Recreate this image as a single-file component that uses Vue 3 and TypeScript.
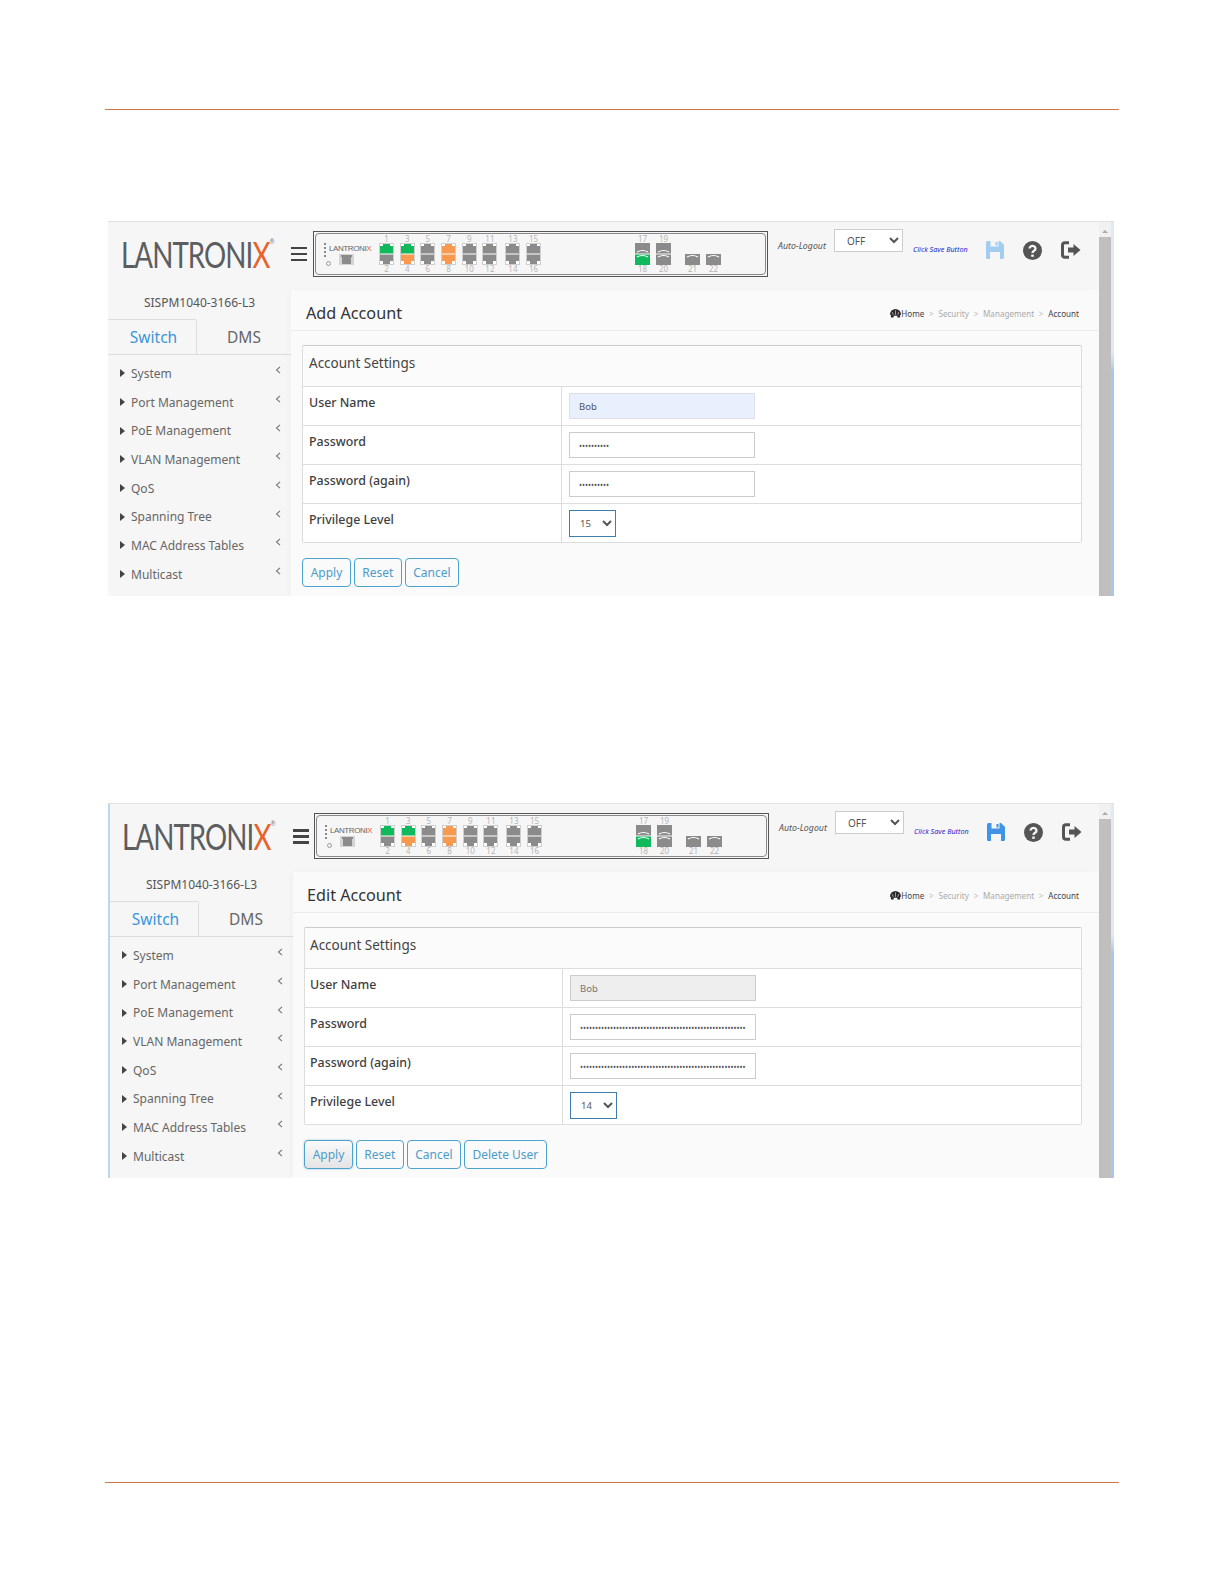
<script setup lang="ts">
interface Port { top: number; bottom: number; topColor: string; bottomColor: string; extra?: boolean }
interface Panel {
  title: string; nameClass: string; user: string; readonlyUser: boolean; passLen: number; level: string;
  buttons: string[]; second: boolean;
}
const c = (t: number, a = 'gray', b = 'gray', extra = false): Port => ({ top: t, bottom: t + 1, topColor: a, bottomColor: b, extra })
const ports: Port[] = [
  c(1, 'green'), c(3, 'green', 'orange'), c(5), c(7, 'orange', 'orange'), c(9), c(11), c(13, 'gray', 'gray', true), c(15),
]
const menu = ['System', 'Port Management', 'PoE Management', 'VLAN Management', 'QoS', 'Spanning Tree', 'MAC Address Tables', 'Multicast']
const crumbs = ['Security', 'Management']
const panels: Panel[] = [
  { title: 'Add Account', nameClass: 'autofill', user: 'Bob', readonlyUser: false, passLen: 10, level: '15', buttons: ['Apply', 'Reset', 'Cancel'], second: false },
  { title: 'Edit Account', nameClass: 'locked', user: 'Bob', readonlyUser: true, passLen: 55, level: '14', buttons: ['Apply', 'Reset', 'Cancel', 'Delete User'], second: true },
]
</script>

<template>
  <div class="page">
    <hr class="rule rule-top" />
    <section v-for="p in panels" :key="p.title" class="panel" :class="{ second: p.second }">
      <div class="main">
        <header class="top">
          <div class="logo-box"><div class="logo">LANTRONI<span class="x">X</span><sup>®</sup></div></div>
          <div class="burger"><i></i><i></i><i></i></div>
          <div class="device">
            <div class="device-inner">
              <div class="dots"><i></i><i></i><i></i><i></i><b></b></div>
              <div class="brand">
                <span class="brand-text">LANTRONI<em>X</em></span>
                <svg class="mini" viewBox="0 0 15 11"><path d="M0 0h15v11H0z" fill="#d4d4d4" /><path d="M2 1h11v2h-1v7H3V3H2z" fill="#8b8b8b" /></svg>
              </div>
              <div class="ports">
                <div v-for="q in ports" :key="q.top" class="port" :class="{ extra: q.extra }">
                  <span>{{ q.top }}</span>
                  <svg viewBox="0 0 15 22" width="15" height="22">
                    <rect x=".5" y=".5" width="14" height="21" fill="#fff" stroke="#cfcfcf" />
                    <path :class="q.topColor" d="M4 1h7v2h3v7.500H1V3h3z" />
                    <path :class="q.bottomColor" d="M1 11.500h13V18h-3v3H4v-3H1z" />
                  </svg>
                  <span>{{ q.bottom }}</span>
                </div>
              </div>
              <div class="sfps">
                <div class="port">
                  <span>17</span>
                  <svg viewBox="0 0 15 22" width="15" height="22">
                    <path class="gray" d="M0 0h15v10.500H0z" /><path class="green" d="M0 11.500h15V22H0z" />
                    <path d="M2 9q5.500-3 11 0M2 14q5.500-3 11 0" fill="none" stroke="#fff" stroke-width="1.200" />
                  </svg>
                  <span>18</span>
                </div>
                <div class="port">
                  <span>19</span>
                  <svg viewBox="0 0 15 22" width="15" height="22">
                    <path class="gray" d="M0 0h15v10.500H0z" /><path class="gray" d="M0 11.500h15V22H0z" />
                    <path d="M2 9q5.500-3 11 0M2 14q5.500-3 11 0" fill="none" stroke="#fff" stroke-width="1.200" />
                  </svg>
                  <span>20</span>
                </div>
                <div class="port low first-low">
                  <svg viewBox="0 0 15 11" width="15" height="11">
                    <path class="gray" d="M0 0h15v11H0z" /><path d="M2 3q5.500-3 11 0" fill="none" stroke="#fff" stroke-width="1.200" />
                  </svg>
                  <span>21</span>
                </div>
                <div class="port low">
                  <svg viewBox="0 0 15 11" width="15" height="11">
                    <path class="gray" d="M0 0h15v11H0z" /><path d="M2 3q5.500-3 11 0" fill="none" stroke="#fff" stroke-width="1.200" />
                  </svg>
                  <span>22</span>
                </div>
              </div>
            </div>
          </div>
          <span class="auto">Auto-Logout</span>
          <select class="off"><option>OFF</option></select>
          <span class="hint">Click Save Button</span>
          <svg class="ic save" viewBox="0 0 18 18" width="18" height="18">
            <path d="M0 1.500A1.500 1.500 0 0 1 1.500 0H14l4 4v12.500a1.500 1.500 0 0 1-1.500 1.500h-15A1.500 1.500 0 0 1 0 16.500z" />
            <path class="hole" d="M4.500 0h8v5.500h-8zM4 11h10v7H4z" />
            <path d="M9.500 1h2v3.500h-2z" />
          </svg>
          <svg class="ic help" viewBox="0 0 18 18" width="19" height="19">
            <circle cx="9" cy="9" r="9" />
            <path d="M6.200 7.200a2.800 2.500 0 1 1 4.300 2.100c-1 .6-1.500 1-1.500 2" fill="none" stroke="#f6f6f6" stroke-width="2.200" />
            <path d="M7.800 12.800h2.400v2.200H7.800z" fill="#f6f6f6" />
          </svg>
          <svg class="ic exit" viewBox="0 0 20 18" width="20" height="18">
            <path d="M8 1.700H4A2.500 2.500 0 0 0 1.500 4.200v9.600A2.500 2.500 0 0 0 4 16.300h4" fill="none" stroke="#555" stroke-width="3" />
            <path d="M7 6.500h5.500V3l7 6-7 6v-3.500H7z" fill="#555" />
          </svg>
        </header>
        <div class="body">
          <aside class="side">
            <div class="name">SISPM1040-3166-L3</div>
            <div class="tabs">
              <div class="tab active">Switch</div>
              <div class="tab">DMS</div>
            </div>
            <ul class="menu">
              <li v-for="m in menu" :key="m">
                <i class="tri"></i><span>{{ m }}</span>
                <svg class="chev" viewBox="0 0 6 8" width="6" height="8"><path d="M5 .8 1.500 4 5 7.200" fill="none" stroke="#777" stroke-width="1.100" /></svg>
              </li>
            </ul>
          </aside>
          <div class="content">
            <div class="head">
              <h2>{{ p.title }}</h2>
              <nav class="crumbs">
                <svg viewBox="0 0 12 10" width="11" height="10">
                  <path d="M1 10V7.500L0 6.500A6 6 0 0 1 12 6.500L11 7.500V10H8V8H4v2z" fill="#2b2b2b" />
                  <path d="M6 7V2M3.500 7 2.500 4M8.500 7 9.500 4" stroke="#fff" stroke-width=".6" />
                </svg>
                <b>Home</b>
                <template v-for="t in crumbs" :key="t"><u>&gt;</u><span>{{ t }}</span></template>
                <u>&gt;</u><b>Account</b>
              </nav>
            </div>
            <div class="card">
              <div class="card-title">Account Settings</div>
              <div class="rows">
                <div class="row">
                  <label>User Name</label>
                  <div><input class="field" :class="p.nameClass" type="text" :value="p.user" :readonly="p.readonlyUser" /></div>
                </div>
                <div class="row">
                  <label>Password</label>
                  <div><input class="field pass" type="password" :value="'x'.repeat(p.passLen)" /></div>
                </div>
                <div class="row">
                  <label>Password (again)</label>
                  <div><input class="field pass" type="password" :value="'x'.repeat(p.passLen)" /></div>
                </div>
                <div class="row">
                  <label>Privilege Level</label>
                  <div><select class="level"><option>{{ p.level }}</option></select></div>
                </div>
              </div>
            </div>
            <div class="actions">
              <button v-for="b in p.buttons" :key="b" type="button" :class="{ pressed: p.second && b === 'Apply' }">{{ b }}</button>
            </div>
          </div>
        </div>
      </div>
      <div class="scroll"><i class="up"></i><div class="thumb"></div></div>
      <div class="strip"></div>
    </section>
    <hr class="rule rule-bottom" />
  </div>
</template>

<style>
html, body { margin: 0; background: #fff; }
</style>

<style scoped>
.page { width: 1224px; height: 1584px; box-sizing: border-box; padding-top: 109px; font-family: "Noto Sans", sans-serif; color: #444; overflow: hidden; }
.rule { height: 1px; border: 0; background: #c8794a; margin: 0 105px; }
.rule-top { margin-bottom: 111px; }
.rule-bottom { margin-top: 304px; }
.panel { display: flex; height: 375px; margin-left: 108px; width: 1006px; overflow: hidden; background: #f6f6f6; border-top: 1px solid #e2e2e2; box-sizing: border-box; }
.panel.second { margin-top: 207px; }
.main { flex: 1; min-width: 0; display: flex; flex-direction: column; }
.second .main { border-left: 2px solid #bcd6ee; }
.top { display: flex; align-items: flex-start; height: 68px; flex: none; }
.logo-box { margin: 14px 0 0 13px; width: 156px; height: 36px; flex: none; }
.logo { font: 400 36px/36px "Lato", sans-serif; color: #5c5d5f; letter-spacing: -1.2px; white-space: nowrap; transform: scaleX(.77); transform-origin: left top; }
.second .logo-box { margin-left: 12px; }
.logo .x { color: #e8622a; }
.logo sup { font-size: 8px; line-height: 8px; vertical-align: 24px; letter-spacing: 0; color: #777; }
.burger { margin: 25px 0 0 14px; width: 16px; display: flex; flex-direction: column; gap: 4px; flex: none; }
.burger i { height: 2px; background: #444; }
.second .burger { gap: 3px; margin-left: 15px; }
.second .burger i { height: 3px; }
.device { margin: 9px 0 0 6px; width: 455px; height: 46px; box-sizing: border-box; border: 1px solid #555; padding: 1px; flex: none; }
.second .device { margin-left: 5px; }
.device-inner { height: 100%; box-sizing: border-box; border: 1px solid #888; border-radius: 4px; display: flex; padding-left: 8px; }
.dots { width: 5px; display: flex; flex-direction: column; gap: 2px; padding-top: 9px; }
.dots i { width: 2px; height: 2px; background: #888; }
.dots b { width: 5px; height: 5px; border: 1px solid #999; border-radius: 50%; box-sizing: border-box; margin: 2px 0 0 2px; }
.brand { width: 50px; display: flex; flex-direction: column; padding-top: 11px; }
.brand-text { font: 8px/8px "Liberation Sans", sans-serif; color: #666; letter-spacing: -.4px; white-space: nowrap; }
.brand-text em { color: #e8622a; font-style: normal; }
.mini { width: 15px; height: 11px; margin: 1px 0 0 10px; flex: none; }
.ports, .sfps { display: flex; gap: 5.700px; }
.sfps { margin-left: 94px; gap: 6px; }
.port { width: 15px; display: flex; flex-direction: column; align-items: center; padding-top: 1px; }
.port span { font-size: 8px; line-height: 8px; height: 8px; color: #b5b5b5; margin: 0 -3px; }
.port svg { display: block; flex: none; }
.port.extra { margin-left: 2.300px; }
.port.low { padding-top: 20px; }
.first-low { margin-left: 8px; }
.gray { fill: #8b8b8b; }
.green { fill: #10b95c; }
.orange { fill: #f79a50; }
.auto { margin: 17px 0 0 10px; width: 56px; font-size: 8.800px; font-style: italic; line-height: 14px; color: #555; white-space: nowrap; flex: none; }
.off { margin: 7px 0 0 0; width: 69px; height: 23px; background: #fff; border: 1px solid #ccc; font: 10px "Noto Sans", sans-serif; color: #555; padding-left: 8px; border-radius: 0; flex: none; }
.hint { margin: 22px 0 0 10px; width: 73px; font-size: 7.200px; font-style: italic; line-height: 10px; color: #2a2ad0; white-space: nowrap; flex: none; }
.ic { flex: none; margin-top: 19px; display: block; }
.save { fill: #a3cdf0; }
.second .save { fill: #3f94e4; }
.hole { fill: #f6f6f6; }
.save .hole + path { fill: #a3cdf0; }
.second .save .hole + path { fill: #3f94e4; }
.help { fill: #555; margin-left: 19px; }
.exit { margin-left: 19px; }
.body { flex: 1; display: flex; min-height: 0; }
.side { width: 183px; flex: none; }
.name { text-align: center; font-size: 12px; line-height: 16px; color: #555; padding: 5px 0 8px; }
.tabs { display: flex; height: 36px; box-sizing: border-box; border-bottom: 1px solid #ddd; }
.tab { width: 94px; text-align: center; font-size: 15.500px; line-height: 34px; color: #666; box-sizing: border-box; padding-top: 1px; }
.tab.active { width: 89px; color: #3b97dc; border: 1px solid #ddd; border-bottom: 0; border-left: 0; border-top-right-radius: 2px; padding: 0 0 0 3px; }
.menu { list-style: none; margin: 4px 0 0; padding: 0; }
.menu li { height: 28.700px; display: flex; align-items: center; font-size: 12px; color: #666; padding-left: 12px; position: relative; }
.tri { width: 0; height: 0; border-left: 5px solid #444; border-top: 4px solid transparent; border-bottom: 4px solid transparent; margin-right: 6px; }
.chev { margin: -6px 10px 0 auto; }
.content { flex: 1; min-width: 0; background: #fafafa; box-shadow: -3px 0 6px rgba(0, 0, 0, .02); padding: 0 15px 0 11px; }
.head { height: 41px; box-sizing: border-box; margin: 0 -15px 14px -11px; padding: 11px 20px 0 15px; border-bottom: 1px solid #ececec; display: flex; justify-content: space-between; }
.second .head { padding-left: 14px; }
h2 { margin: 0; font-size: 16.200px; line-height: 24px; font-weight: 400; color: #333; }
.crumbs { display: flex; align-items: center; gap: 4.800px; height: 24px; font-size: 8.100px; color: #aaa; }
.crumbs svg { margin-right: -4.800px; }
.crumbs b { font-weight: 400; color: #444; }
.crumbs u { text-decoration: none; font-size: 8px; color: #bbb; }
.card { border: 1px solid #ddd; border-top-color: #ccc; border-radius: 2px; background: #fbfbfb; margin-right: 2px; }
.card-title { height: 40px; box-sizing: border-box; padding: 7px 6px 0; font-size: 13.500px; line-height: 20px; color: #444; }
.second .card-title { padding-left: 5px; }
.rows { border-top: 1px solid #ddd; background: #fff; }
.row { display: grid; grid-template-columns: 259px 1fr; height: 39px; box-sizing: border-box; border-top: 1px solid #ddd; }
.second .row { grid-template-columns: 258px 1fr; }
.row:first-child { border-top: 0; height: 38px; }
.row label { border-right: 1px solid #ddd; padding: 6px 6px 0; font-size: 12.400px; line-height: 20px; font-weight: 500; color: #3f3f3f; }
.second .row label { padding-left: 5px; }
.row > div { padding: 6px 0 0 7px; }
.field { display: block; width: 186px; height: 26px; box-sizing: border-box; border: 1px solid #ccc; padding: 0 9px; font: 9.500px "Noto Sans", sans-serif; color: #555; background: #fff; outline: 0; }
.field.autofill { background: #e8f0fe; border-color: #dde; }
.field.locked { background: #eee; color: #777; }
.field.pass { font-size: 8px; color: #555; }
.level { display: block; width: 47px; height: 27px; box-sizing: border-box; border: 1px solid #3d7eaa; background: #fff; font: 9.500px "Noto Sans", sans-serif; color: #555; padding-left: 6px; border-radius: 0; }
.actions { display: flex; gap: 2.500px; margin-top: 15px; }
.actions button { height: 29px; padding: 0 7.700px; background: transparent; border: 1px solid #4ba2cf; border-radius: 4px; font: 12px "Noto Sans", sans-serif; color: #4c9cc9; }
.actions button.pressed { background: linear-gradient(#fafafa, #e4e4e4); box-shadow: 0 0 2px #9bc; }
.scroll { width: 12px; flex: none; background: #f1f1f1; position: relative; padding-top: 15px; box-sizing: border-box; }
.up { position: absolute; top: 8px; left: 3px; width: 0; height: 0; border-left: 3px solid transparent; border-right: 3px solid transparent; border-bottom: 3px solid #aaa; }
.thumb { height: 100%; background: #c0bfbd; }
.strip { width: 3px; flex: none; background: linear-gradient(#dfeaf5 0, #dfeaf5 35%, #a4c9ec 40%, #a4c9ec 100%); }
</style>
